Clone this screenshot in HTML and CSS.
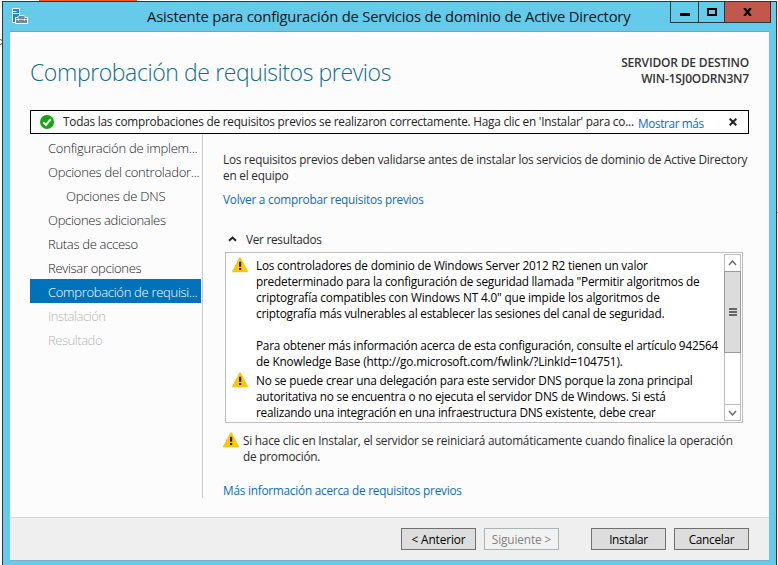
FILE: index.html
```
<!DOCTYPE html>
<html lang="es">
<head>
<meta charset="utf-8">
<title>Asistente para configuración de Servicios de dominio de Active Directory</title>
<link rel="stylesheet" href="styles.css">
</head>
<body>
<svg width="0" height="0" class="defs" aria-hidden="true">
  <symbol id="warn" viewBox="0 0 16 16">
    <path d="M7.300.6 Q8 0 8.700.6 L16 14.600 V15.200 H0 V14.600 Z" fill="#fdc608"/>
    <path d="M7 4.800h2.200v5H7z M7 11h2.200v2H7z" fill="#222"/>
  </symbol>
</svg>
<div class="desktop">
  <div class="behind-top"></div>
  <svg class="behind-left" width="2" height="8" viewBox="0 0 2 8"><path d="M0 1.500 Q2 1.500 2 3M0 6.500 Q2 6.500 2 5" stroke="#666" fill="none"/></svg>
  <div class="behind-right"></div>
  <div class="window">
    <header class="titlebar">
      <svg class="app-icon" width="17" height="17" viewBox="0 0 17 17">
        <path d="M.5.5h7v14h-7z" fill="#1b86d8" stroke="#fff"/>
        <path d="M1 3.500h3.500M1 5.500h6" stroke="#fff"/>
        <path d="M3.500 9.500h2.500v-1l1-1h5l1 1v1h2.500v6h-12z" fill="#71889b" stroke="#fff"/>
        <path d="M7 9.500h5" stroke="#71889b"/>
        <path d="M4 11.500h11" stroke="#c6d2da"/>
        <path d="M6.500 10.500v2M12.500 10.500v2" stroke="#fff"/>
      </svg>
      <h1 class="title">Asistente para configuración de Servicios de dominio de Active Directory</h1>
      <div class="controls">
        <span class="ctl min"><i></i></span>
        <span class="ctl max"><i></i></span>
        <span class="ctl close"><svg width="9" height="8" viewBox="0 0 9 8"><path d="M1.200 0 7.800 8M7.800 0 1.200 8" stroke="#000" stroke-width="2.300"/></svg></span>
      </div>
    </header>
    <main class="client">
      <div class="heading">
        <h2>Comprobación de requisitos previos</h2>
        <div class="server"><div class="s1">SERVIDOR DE DESTINO</div><div class="s2">WIN-1SJ0ODRN3N7</div></div>
      </div>
      <div class="notice">
        <svg width="14" height="14" viewBox="0 0 14 14"><circle cx="7" cy="7" r="7" fill="#10a810"/><path d="M3.200 7.200 6 10 10.800 4.200" stroke="#fff" stroke-width="2" fill="none"/></svg>
        <span class="msg">Todas las comprobaciones de requisitos previos se realizaron correctamente. Haga clic en 'Instalar' para co...</span>
        <a class="more">Mostrar más</a>
        <svg class="dismiss" width="8" height="8" viewBox="0 0 8 8"><path d="M.7.7 7.300 7.300M7.300.7.7 7.300" stroke="#222" stroke-width="2"/></svg>
      </div>
      <div class="body">
        <nav class="steps">
          <a class="n1">Configuración de implem...</a>
          <a class="n1">Opciones del controlador...</a>
          <a class="sub">Opciones de DNS</a>
          <a>Opciones adicionales</a>
          <a>Rutas de acceso</a>
          <a>Revisar opciones</a>
          <a class="active">Comprobación de requisi...</a>
          <a class="off">Instalación</a>
          <a class="off">Resultado</a>
        </nav>
        <section class="content">
          <p class="intro">Los requisitos previos deben validarse antes de instalar los servicios de dominio de Active Directory<br>en el equipo</p>
          <a class="link rerun">Volver a comprobar requisitos previos</a>
          <div class="toggle"><svg width="9" height="6" viewBox="0 0 9 6"><path d="M1 4.800 4.500 1.500 8 4.800" stroke="#222" stroke-width="2" fill="none"/></svg><span>Ver resultados</span></div>
          <div class="results">
            <div class="list">
              <div class="item">
                <svg width="16" height="16"><use href="#warn"/></svg>
                <p><span class="k1">Los controladores de dominio de Windows Server 2012 R2 tienen un valor</span><br>
                <span class="k2">predeterminado para la configuración de seguridad llamada "Permitir algoritmos de</span><br>
                <span class="k0">criptografía compatibles con Windows NT 4.0" que impide los algoritmos de</span><br>
                <span class="k3">criptografía más vulnerables al establecer las sesiones del canal de seguridad.</span><br><br>
                <span class="k2">Para obtener más información acerca de esta configuración, consulte el artículo 942564</span><br>
                <span class="k5">de Knowledge Base (http://go.microsoft.com/fwlink/?LinkId=104751).</span></p>
              </div>
              <div class="item">
                <svg width="16" height="16"><use href="#warn"/></svg>
                <p><span class="k1">No se puede crear una delegación para este servidor DNS porque la zona principal</span><br>
                <span class="k1">autoritativa no se encuentra o no ejecuta el servidor DNS de Windows. Si está</span><br>
                <span class="k4">realizando una integración en una infraestructura DNS existente, debe crear</span></p>
              </div>
            </div>
            <div class="scroll">
              <div class="arrow"><svg width="9" height="6" viewBox="0 0 9 6"><path d="M1 5 4.500 1 8 5" stroke="#666" stroke-width="1.400" fill="none"/></svg></div>
              <div class="thumb"><i></i><i></i><i></i></div>
              <div class="track"></div>
              <div class="arrow down"><svg width="9" height="6" viewBox="0 0 9 6"><path d="M1 1 4.500 5 8 1" stroke="#666" stroke-width="1.400" fill="none"/></svg></div>
            </div>
          </div>
          <div class="restart">
            <svg width="16" height="16"><use href="#warn"/></svg>
            <p>Si hace clic en Instalar, el servidor se reiniciará automáticamente cuando finalice la operación<br>de promoción.</p>
          </div>
          <a class="link info">Más información acerca de requisitos previos</a>
        </section>
      </div>
      <footer class="footer">
        <button class="prev">&lt; Anterior</button>
        <button class="next" disabled>Siguiente &gt;</button>
        <button class="install">Instalar</button>
        <button class="cancel">Cancelar</button>
      </footer>
    </main>
  </div>
</div>
</body>
</html>
```
FILE: styles.css
```
* { box-sizing: border-box; margin: 0; padding: 0; }
body { background: #fff; font: 11.8px/16px "Open Sans", "Noto Sans", sans-serif; color: #2b2b2b; overflow: hidden; }
svg { display: block; flex: none; }
.defs { position: absolute; }
.desktop { position: relative; width: 778px; height: 565px; overflow: hidden; padding: 1px 1px 0 2px; }
.behind-top { position: absolute; left: 39px; top: 0; width: 98px; height: 1px; background: #f15a22; }
.behind-left { position: absolute; left: 0; top: 38px; }
.behind-right { position: absolute; left: 777px; top: 212px; width: 1px; height: 1px; background: #777; }
.window { position: relative; width: 775px; height: 564px; background: #66caea; border: 1px solid #27393f; border-bottom: 0; padding: 0 7px 4px; display: flex; flex-direction: column; }
.titlebar { height: 30px; display: flex; flex: none; border-bottom: 1px solid #62abc6; }
.app-icon { margin: 6px 0 0 2px; }
.title { font-size: 14.8px; font-weight: 400; line-height: 20px; color: #0c171b; letter-spacing: -.2px; white-space: nowrap; margin: 4px 0 0 118px; width: 523px; }
.controls { display: flex; height: 22px; margin: -1px -2px 0 0; flex: none; }
.ctl { border: 1px solid #263840; border-right: 0; display: flex; align-items: center; justify-content: center; }
.min { width: 28px; }
.min i { width: 10px; height: 3px; background: #000; margin-top: 5px; }
.max { width: 26px; }
.max i { width: 10px; height: 8px; border: 2px solid #000; }
.close { width: 47px; background: #c2574e; border-right: 1px solid #4a2723; }
.client { flex: 1; background: #fcfcfc; display: flex; flex-direction: column; min-height: 0; }
.heading { display: flex; justify-content: space-between; height: 78px; padding: 22px 20px 0; }
.heading h2 { font-size: 23px; line-height: 36px; font-weight: 300; color: #0f6d91; letter-spacing: -.4px; white-space: nowrap; }
.server { font-size: 12px; font-weight: 600; text-align: right; color: #333; padding-top: 1px; }
.s1 { letter-spacing: -.172px; }
.s2 { letter-spacing: -.186px; }
.notice { height: 24px; margin: 0 20px; border: 1px solid #000; background: #fff; display: flex; align-items: center; padding: 0 11px 0 9px; color: #222; flex: none; }
.msg { margin-left: 9px; width: 575px; letter-spacing: -.228px; white-space: nowrap; position: relative; top: -1px; }
.more { color: #0a6cbd; letter-spacing: -.38px; position: relative; top: 1px; }
.dismiss { margin-left: auto; }
.body { display: grid; grid-template-columns: 173px 1fr; margin: 1px 20px 0; height: 362px; flex: none; }
.steps { border-right: 1px solid #c8c8c8; padding-right: 1px; font-size: 13px; letter-spacing: -.3px; }
.steps a { display: block; height: 24px; line-height: 27px; padding-left: 18px; white-space: nowrap; overflow: hidden; color: #222; font-weight: 300; }
.steps .n1 { letter-spacing: -.24px; }
.steps .sub { padding-left: 36px; letter-spacing: -.22px; }
.steps .active { background: #0072bc; color: #fff; }
.steps .off { color: #b5b5b5; letter-spacing: -.45px; }
.content { padding: 16px 0 0 20px; white-space: nowrap; }
.intro { letter-spacing: -.208px; }
.link { display: block; color: #0a6cbd; }
.rerun { margin-top: 8px; letter-spacing: -.235px; }
.toggle { display: flex; align-items: center; margin-top: 24px; padding-left: 5px; letter-spacing: -.272px; }
.toggle span { margin-left: 9px; }
.results { width: 518px; height: 171px; margin: 5px 0 0 2px; border: 1px solid #bdbdbd; background: #fff; color: #000; display: flex; justify-content: space-between; padding: 1px; }
.list { padding: 3px 0 0 5px; }
.item { display: flex; margin-bottom: 3px; }
.item p { margin-left: 8px; }
.k0 { letter-spacing: -.156px; }
.k1 { letter-spacing: -.204px; }
.k2 { letter-spacing: -.222px; }
.k3 { letter-spacing: -.24px; }
.k4 { letter-spacing: -.256px; }
.k5 { letter-spacing: -.155px; }
.scroll { width: 17px; display: flex; flex-direction: column; border: 1px solid #bdbdbd; }
.arrow { height: 16px; display: flex; align-items: center; justify-content: center; flex: none; }
.down { border-top: 1px solid #bdbdbd; }
.thumb { height: 82px; margin: 0 -1px; background: #dcdcdc; border: 1px solid #9a9a9a; display: flex; flex-direction: column; align-items: center; justify-content: center; gap: 1px; flex: none; }
.thumb i { width: 8px; height: 2px; background: #666; }
.track { flex: 1; }
.restart { display: flex; margin-top: 9px; letter-spacing: -.225px; }
.restart p { margin-left: 4px; }
.info { margin-top: 18px; letter-spacing: -.234px; }
.footer { margin-top: auto; height: 44px; background: #efefef; border-top: 1px solid #d9d9d9; border-bottom: 1px solid #7ab1c6; display: flex; padding: 10px 20px 0; justify-content: flex-end; flex: none; }
button { width: 75px; height: 22px; border: 1px solid #707070; background: #dddddd; font: inherit; line-height: 20px; color: #000; margin-left: 8px; letter-spacing: -.1px; }
.next { border-color: #adb2b5; background: #f2f2f2; color: #838383; }
.install { margin-left: 32px; letter-spacing: -.32px; }
.cancel { letter-spacing: -.27px; }
```
